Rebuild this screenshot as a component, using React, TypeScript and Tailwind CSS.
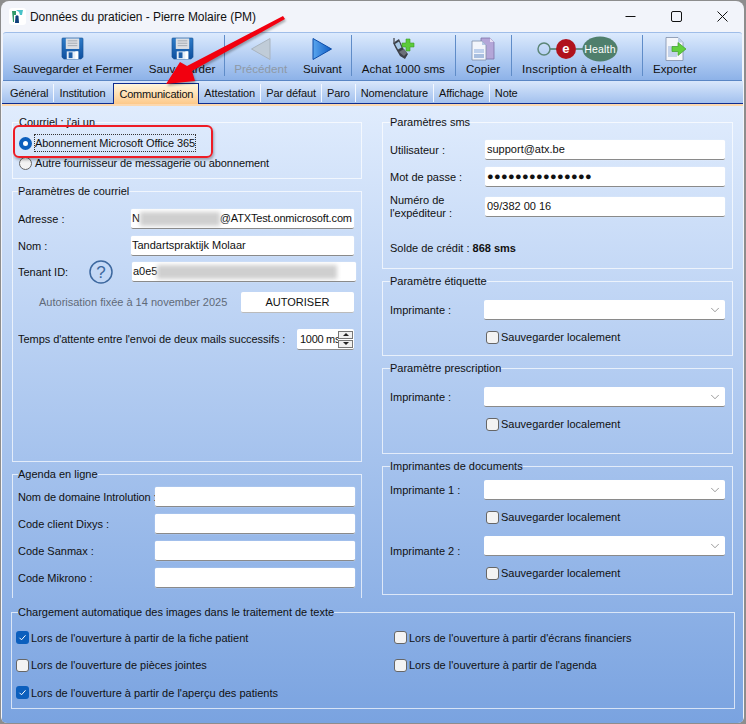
import * as React from "react";
import { ChevronDown } from "lucide-react";

const Floppy = () => (
  <svg width="23" height="23" viewBox="0 0 24 24">
    <defs>
      <linearGradient id="fl" x1="0" y1="0" x2="0" y2="1">
        <stop offset="0" stopColor="#2f7cc8" />
        <stop offset="1" stopColor="#0e4f9f" />
      </linearGradient>
    </defs>
    <path d="M2 1h20a1 1 0 0 1 1 1v19l-2 2H3l-2-2V2a1 1 0 0 1 1-1z" fill="url(#fl)" stroke="#174f8f" strokeWidth="0.6" />
    <rect x="5" y="1.500" width="14" height="11" fill="#dcdfe4" />
    <path d="M7 4h10M7 6.500h10M7 9h10" stroke="#a4a9b2" strokeWidth="1" />
    <rect x="6" y="15" width="12" height="8" fill="#e6eef8" />
    <rect x="8" y="16" width="4" height="6" fill="#1d5ea8" />
    <rect x="15" y="15" width="3" height="8" fill="#ffffff" />
  </svg>
);

const ArrowLeft = () => (
  <svg width="24" height="24" viewBox="0 0 24 24">
    <path d="M21 1.500V22.500L2.500 12z" fill="#c0ccd8" stroke="#a9b4bf" strokeLinejoin="round" />
  </svg>
);

const ArrowRight = () => (
  <svg width="24" height="24" viewBox="0 0 24 24">
    <defs>
      <linearGradient id="ar" x1="0" y1="0" x2="1" y2="0">
        <stop offset="0" stopColor="#5aa6ee" />
        <stop offset="1" stopColor="#0e5cc4" />
      </linearGradient>
    </defs>
    <path d="M3 1.500V22.500L21.500 12z" fill="url(#ar)" stroke="#0c4ca8" strokeLinejoin="round" />
  </svg>
);

const PhonePlus = () => (
  <svg width="24" height="24" viewBox="0 0 24 24">
    <path d="M2 6l6-4 4 9 5 6-3 5-5-3-4-7z" fill="#3c4048" />
    <path d="M4 7l4-2.500 2.500 6-3.500 2z" fill="#a8c8e6" />
    <path d="M8 15l5-3 3 4-3 3z" fill="#6c7078" />
    <path d="M3 1v5" stroke="#5a5e66" strokeWidth="1.500" />
    <path d="M15 2h4v4h4v4h-4v4h-4v-4h-4V6h4z" fill="#5ccb3a" stroke="#3c9a28" strokeWidth="0.6" />
  </svg>
);

const CopyDocs = () => (
  <svg width="24" height="24" viewBox="0 0 24 24">
    <path d="M10 1h9l4 4v17H10z" fill="#b4a6d8" stroke="#7f74a8" strokeWidth="0.8" />
    <path d="M19 1v4h4z" fill="#e6e0f4" />
    <path d="M1 4h10l4 4v15H1z" fill="#f2f5fb" stroke="#7f8ea8" strokeWidth="0.8" />
    <path d="M11 4v4h4z" fill="#b7c8e6" />
    <rect x="3" y="12" width="10" height="4" fill="#bed0ec" />
    <rect x="3" y="17" width="10" height="4" fill="#a8bedf" />
  </svg>
);

const EHealthLogo = () => (
  <svg width="82" height="26" viewBox="0 0 82 26">
    <path d="M14 13h10M40 13h8" stroke="#4b7a66" strokeWidth="1.500" />
    <circle cx="8" cy="13" r="6" fill="none" stroke="#5c8677" strokeWidth="1.500" />
    <circle cx="30" cy="13" r="10" fill="#b0121c" />
    <text x="30" y="17" textAnchor="middle" fontSize="13" fontWeight="700" fill="#ffffff">e</text>
    <ellipse cx="64" cy="13" rx="17.500" ry="12.500" fill="#4f7f6c" />
    <text x="64" y="17" textAnchor="middle" fontSize="10.500" fill="#ffffff">Health</text>
  </svg>
);

const ExportDoc = () => (
  <svg width="24" height="24" viewBox="0 0 24 24">
    <path d="M3 0.500h12l5 5v18H3z" fill="#f4f6fb" stroke="#7f8ea8" strokeWidth="0.8" />
    <path d="M15 0.500v5h5z" fill="#bcd0ea" />
    <rect x="5" y="9" width="9" height="11" fill="#c3d2ea" />
    <path d="M9 9.500h6v-4l8 6.500-8 6.500v-4H9z" fill="#62d03e" stroke="#3d9e2a" strokeWidth="0.7" />
  </svg>
);

const ToolButton = ({ label, icon, disabled, pad = "px-[8px]" }: { label: string; icon: React.ReactNode; disabled?: boolean; pad?: string }) => (
  <div className={`flex flex-col items-center pt-[3px] ${pad}`}>
    <div className="h-[25px] flex items-center justify-center">{icon}</div>
    <span className={`h-[16px] leading-[16px] text-[11.600px] whitespace-nowrap ${disabled ? "text-[#8e99a6]" : "text-[#111]"}`}>{label}</span>
  </div>
);

const ToolSep = () => <div className="w-px h-[41px] my-[2px] bg-[#5f8cc8] mx-[1px]" />;

const tabs = ["Général", "Institution", "Communication", "Attestation", "Par défaut", "Paro", "Nomenclature", "Affichage", "Note"];

const TabStrip = () => (
  <div className="h-[23px] shrink-0 flex items-end px-[3px] bg-gradient-to-b from-[#d9e7fb] to-[#a3c1ee] border-b border-[#0d2c8f] mx-px tracking-[-0.1px]">
    {tabs.map((t, i) =>
      t === "Communication" ? (
        <div
          key={t}
          className="h-[21px] -mb-px px-[5px] ml-[3px] leading-[20px] tracking-[-0.2px] bg-gradient-to-b from-[#fff6dc] to-[#fdc98a] border border-b-0 border-[#0d2c8f] text-[#111]"
        >
          {t}
        </div>
      ) : (
        <div
          key={t}
          className={`h-[18px] mb-[1px] px-[5px] leading-[18px] text-[#111] ${
            i < tabs.length - 1 && tabs[i + 1] !== "Communication" && i !== 2 ? "border-r border-[#f4f8ff]" : ""
          }`}
        >
          {t}
        </div>
      ),
    )}
  </div>
);

const Group = ({ title, className, children }: { title: string; className: string; children: React.ReactNode }) => (
  <fieldset className={`border border-[#ffffffb0] min-w-0 ${className}`}>
    <legend className="h-[16px] leading-[16px] whitespace-nowrap text-[#111]">{title}</legend>
    {children}
  </fieldset>
);

const Input = ({ className = "", children }: { className?: string; children?: React.ReactNode }) => (
  <div className={`h-[20px] bg-white rounded-[2px] border-b border-[#8a8a8a] shadow-[0_0_1px_#ffffff] px-[1px] leading-[19px] whitespace-nowrap overflow-hidden text-[#111] ${className}`}>
    {children}
  </div>
);

const Combo = () => (
  <div className="h-[20px] w-[241px] bg-white rounded-[2px] border-b border-[#8a8a8a] flex items-center justify-end pr-[3px]">
    <ChevronDown size={14} strokeWidth={1} className="text-[#555]" />
  </div>
);

const Blur = ({ w }: { w: number }) => (
  <span className="inline-block h-[14px] align-middle bg-[#cfcfcf] blur-[2px]" style={{ width: w }} />
);

const Check = ({ checked, label }: { checked?: boolean; label: string }) => (
  <div className="flex items-center gap-[2px] h-[16px]">
    {checked ? (
      <span className="w-[13px] h-[13px] rounded-[3px] bg-[#0c5fbd] flex items-center justify-center">
        <svg width="9" height="9" viewBox="0 0 9 9">
          <path d="M1.500 4.800l2 2 4-4.500" fill="none" stroke="#ffffff" strokeWidth="1" />
        </svg>
      </span>
    ) : (
      <span className="w-[13px] h-[13px] rounded-[3px] bg-[#f3f3f3] border border-[#666]" />
    )}
    <span className="whitespace-nowrap text-[#111]">{label}</span>
  </div>
);

const Row = ({ label, labelWidth, className = "", children }: { label: React.ReactNode; labelWidth: string; className?: string; children: React.ReactNode }) => (
  <div className={`flex items-center ${className}`}>
    <div className={`${labelWidth} shrink-0 whitespace-nowrap overflow-hidden text-[#111]`}>{label}</div>
    {children}
  </div>
);

const Spin = () => (
  <div className="w-[57px] h-[21px] bg-white rounded-[2px] border-b border-[#8a8a8a] flex items-center">
    <span className="w-[41px] pl-[3px] overflow-hidden whitespace-nowrap text-[#111] tracking-[-0.3px]">1000 ms</span>
    <div className="w-[15px] h-[17px] flex flex-col gap-px">
      <span className="flex-1 bg-[#f0f0f0] border border-[#777] flex items-center justify-center">
        <span className="w-0 h-0 border-x-[3px] border-x-transparent border-b-[3px] border-b-[#222]" />
      </span>
      <span className="flex-1 bg-[#f0f0f0] border border-[#777] flex items-center justify-center">
        <span className="w-0 h-0 border-x-[3px] border-x-transparent border-t-[3px] border-t-[#222]" />
      </span>
    </div>
  </div>
);

const App = () => {
  return (
    <div className="relative w-[746px] h-[724px] overflow-hidden bg-[#8d8d8d] text-[11px] font-['Liberation_Sans',sans-serif]">
      <div className="ml-px mr-[2px] mt-px h-[722px] rounded-t-[8px] rounded-b-[6px] overflow-hidden bg-[#f2f4fa] flex flex-col">
        {/* title bar */}
        <div className="h-[31px] shrink-0 flex items-center pl-[8px] text-[12px] text-[#111]">
          <svg width="17" height="17" viewBox="0 0 17 17">
            <rect width="17" height="17" rx="3" fill="#ffffff" />
            <path d="M3 3h4v4H5v7H4z" fill="#2f9a6a" />
            <path d="M7 2h7l-1 5h-2l-1-3z" fill="#49c2c8" />
            <path d="M6.500 8a2 2 0 0 1 3 0l0.500 7H6z" fill="#0e3f7a" />
          </svg>
          <span className="ml-[4px] tracking-[-0.05px]">Données du praticien - Pierre Molaire (PM)</span>
          <div className="ml-auto flex items-center gap-[35px] pr-[16px]">
            <svg width="11" height="11" viewBox="0 0 11 11"><path d="M0.500 5.500h10" stroke="#111" /></svg>
            <svg width="11" height="11" viewBox="0 0 11 11"><rect x="0.500" y="0.500" width="10" height="10" rx="1.500" fill="none" stroke="#111" /></svg>
            <svg width="11" height="11" viewBox="0 0 11 11"><path d="M0.500 0.500l10 10M10.500 0.500l-10 10" stroke="#111" /></svg>
          </div>
        </div>

        {/* toolbar */}
        <div className="h-[49px] shrink-0 mx-[2px] rounded-t-[3px] border-t border-[#9fbde8] border-b border-b-[#5a86c4] bg-gradient-to-b from-[#dceafd] to-[#8db2e8] flex pl-[2px]">
          <ToolButton label="Sauvegarder et Fermer" icon={<Floppy />} />
          <ToolButton label="Sauvegarder" icon={<Floppy />} />
          <ToolSep />
          <ToolButton label="Précédent" icon={<ArrowLeft />} disabled />
          <ToolButton label="Suivant" icon={<ArrowRight />} />
          <ToolSep />
          <ToolButton label="Achat 1000 sms" icon={<PhonePlus />} pad="pl-[9px] pr-[9px]" />
          <ToolSep />
          <ToolButton label="Copier" icon={<CopyDocs />} pad="pl-[9px] pr-[10px]" />
          <ToolSep />
          <div className="tracking-[0.2px]">
            <ToolButton label="Inscription à eHealth" icon={<EHealthLogo />} pad="pl-[9px] pr-[9px]" />
          </div>
          <ToolSep />
          <ToolButton label="Exporter" icon={<ExportDoc />} pad="pl-[9px] pr-[9px]" />
        </div>

        <TabStrip />
        <div className="h-[2px] shrink-0 bg-[#fcd8ae] mx-px" />

        {/* page */}
        <div className="flex-1 mx-px bg-gradient-to-b from-[#e0ecfd] to-[#7aa3e0] pt-[8px] px-[10px]">
          <div className="flex gap-[20px] h-[490px]">
            <div className="w-[351px] flex flex-col gap-[4px]">
              <Group title="Courriel : j'ai un" className="h-[65px] pl-[6px]">
                <div className="flex items-center gap-[3px] h-[16px] mt-[5px] tracking-[-0.1px]">
                  <span className="w-[13px] h-[13px] rounded-full border-[4px] border-[#0c5fbd] bg-white" />
                  <span className="whitespace-nowrap text-[#111] outline-1 outline-dotted outline-[#333]">Abonnement Microsoft Office 365</span>
                </div>
                <div className="flex items-center gap-[3px] h-[16px] mt-[4px] tracking-[-0.1px]">
                  <span className="w-[13px] h-[13px] rounded-full border border-[#666] bg-[#f3f3f3]" />
                  <span className="whitespace-nowrap text-[#111]">Autre fournisseur de messagerie ou abonnement</span>
                </div>
              </Group>

              <Group title="Paramètres de courriel" className="h-[279px] pl-[5px]">
                <Row label="Adresse :" labelWidth="w-[113px]" className="mt-[10px]">
                  <Input className="w-[223px] tracking-[-0.15px]">
                    N<Blur w={80} />@ATXTest.onmicrosoft.com
                  </Input>
                </Row>
                <Row label="Nom :" labelWidth="w-[113px]" className="mt-[7px]">
                  <Input className="w-[223px]">Tandartspraktijk Molaar</Input>
                </Row>
                <div className="flex items-center mt-[6px] h-[20px]">
                  <span className="w-[71px] text-[#111]">Tenant ID:</span>
                  <svg width="24" height="24" viewBox="0 0 24 24" className="shrink-0">
                    <circle cx="12" cy="12" r="11" fill="none" stroke="#3d689f" strokeWidth="1.500" />
                    <text x="12" y="18" textAnchor="middle" fontSize="17" fill="#3d689f">?</text>
                  </svg>
                  <Input className="w-[224px] ml-[19px]">
                    a0e5<Blur w={180} />
                  </Input>
                </div>
                <div className="flex items-center mt-[10px] h-[21px]">
                  <span className="ml-[21px] w-[202px] text-[#5f6a78] whitespace-nowrap">Autorisation fixée à 14 november 2025</span>
                  <div className="w-[113px] h-[21px] bg-white rounded-[2px] border-b border-[#bbb] text-center leading-[20px] text-[#111]">AUTORISER</div>
                </div>
                <Row label={<span className="tracking-[-0.05px]">Temps d'attente entre l'envoi de deux mails successifs :</span>} labelWidth="w-[279px]" className="mt-[16px]">
                  <Spin />
                </Row>
              </Group>

              <Group title="Agenda en ligne" className="h-[132px] pl-[5px] border-b-0">
                <div className="flex flex-col gap-[7px] pt-[5px]">
                  <Row label={<span className="tracking-[-0.1px]">Nom de domaine Introlution :</span>} labelWidth="w-[137px]">
                    <Input className="w-[200px]" />
                  </Row>
                  {["Code client Dixys :", "Code Sanmax :", "Code Mikrono :"].map((l) => (
                    <Row key={l} label={l} labelWidth="w-[137px]">
                      <Input className="w-[200px]" />
                    </Row>
                  ))}
                </div>
              </Group>
            </div>

            <div className="w-[352px] flex flex-col gap-[4px]">
              <Group title="Paramètres sms" className="h-[155px] pl-[7px]">
                <div className="flex flex-col gap-[7px] pt-[10px]">
                  <Row label="Utilisateur :" labelWidth="w-[95px]">
                    <Input className="w-[240px] pl-[2px]">support@atx.be</Input>
                  </Row>
                  <Row label="Mot de passe :" labelWidth="w-[95px]">
                    <Input className="w-[240px] pl-[2px] font-bold tracking-[0.35px]">●●●●●●●●●●●●●●●</Input>
                  </Row>
                  <Row label={<span className="block whitespace-normal leading-[13px]">Numéro de l'expéditeur :</span>} labelWidth="w-[95px]">
                    <Input className="w-[240px] pl-[2px]">09/382 00 16</Input>
                  </Row>
                </div>
                <p className="mt-[20px] text-[#111]">
                  Solde de crédit : <b>868 sms</b>
                </p>
              </Group>

              <Group title="Paramètre étiquette" className="h-[83px] pl-[7px]">
                <Row label="Imprimante :" labelWidth="w-[94px]" className="mt-[11px]">
                  <Combo />
                </Row>
                <div className="ml-[96px] mt-[9px]">
                  <Check label="Sauvegarder localement" />
                </div>
              </Group>

              <Group title="Paramètre prescription" className="h-[94px] pl-[7px]">
                <Row label="Imprimante :" labelWidth="w-[94px]" className="mt-[11px]">
                  <Combo />
                </Row>
                <div className="ml-[96px] mt-[9px]">
                  <Check label="Sauvegarder localement" />
                </div>
              </Group>

              <Group title="Imprimantes de documents" className="h-[137px] pl-[7px]">
                <Row label="Imprimante 1 :" labelWidth="w-[94px]" className="mt-[6px]">
                  <Combo />
                </Row>
                <div className="ml-[96px] mt-[9px]">
                  <Check label="Sauvegarder localement" />
                </div>
                <Row label="Imprimante 2 :" labelWidth="w-[94px] translate-y-[5px]" className="mt-[11px]">
                  <Combo />
                </Row>
                <div className="ml-[96px] mt-[9px]">
                  <Check label="Sauvegarder localement" />
                </div>
              </Group>
            </div>
          </div>

          <Group title="Chargement automatique des images dans le traitement de texte" className="h-[105px] w-[724px] -ml-px pl-[6px]">
            <div className="grid grid-cols-[378px_1fr] auto-rows-[27.500px] items-center pt-[4px] -ml-[2px]">
              <Check checked label="Lors de l'ouverture à partir de la fiche patient" />
              <Check label="Lors de l'ouverture à partir d'écrans financiers" />
              <Check label="Lors de l'ouverture de pièces jointes" />
              <Check label="Lors de l'ouverture à partir de l'agenda" />
              <Check checked label="Lors de l'ouverture à partir de l'aperçu des patients" />
            </div>
          </Group>
        </div>
      </div>

      {/* annotations laid over the screenshot */}
      <div className="absolute left-[13px] top-[125px] w-[200px] h-[33px] rounded-[6px] border-2 border-[#ee1c25] shadow-[1px_2px_3px_#0000004d]" />
      <svg width="746" height="120" viewBox="0 0 746 120" className="absolute left-0 top-0 pointer-events-none drop-shadow-[1px_2px_1px_#0000004d]">
        <path d="M283 16L285 19L192 71L195 81L166 84L180 62L187 66Z" fill="#f2000f" />
      </svg>
    </div>
  );
};

export default App;
